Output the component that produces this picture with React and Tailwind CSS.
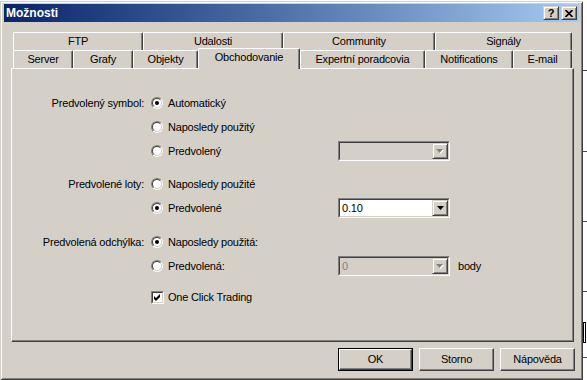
import React from 'react';

const backTabs = [
  { label: 'FTP', w: 'w-[130px]' },
  { label: 'Udalosti', w: 'w-[140px]' },
  { label: 'Community', w: 'w-[152px]' },
  { label: 'Signály', w: 'w-[137px]' },
];

const frontTabs = [
  { label: 'Server', w: 'w-[60px]' },
  { label: 'Grafy', w: 'w-[60px]' },
  { label: 'Objekty', w: 'w-[65px]' },
  { label: 'Obchodovanie', w: 'w-[102px]', active: true },
  { label: 'Expertní poradcovia', w: 'w-[125px]' },
  { label: 'Notifications', w: 'w-[88px]' },
  { label: 'E-mail', w: 'w-[59px]' },
];

// classic raised tab, open at the bottom
const tabEdge =
  'flex items-center justify-center border-l border-t border-r border-white border-r-[#404040] shadow-[inset_-1px_0_0_#808080] rounded-t-[2px]';

function Tab({ label, w, active }) {
  if (active) {
    return (
      <div className={`${tabEdge} ${w} relative top-[1px] z-10 h-[21px] bg-[#d4d0c8] pb-[3px]`}>
        {label}
      </div>
    );
  }
  return <div className={`${tabEdge} ${w} h-[18px] bg-[#d4d0c8]`}>{label}</div>;
}

function Radio({ checked }) {
  return (
    <span className="flex h-[12px] w-[12px] shrink-0 rounded-full border border-t-[#808080] border-l-[#808080] border-r-white border-b-white">
      <span className="flex h-full w-full items-center justify-center rounded-full border border-t-[#404040] border-l-[#404040] border-r-[#d4d0c8] border-b-[#d4d0c8] bg-white">
        {checked && <span className="h-[4px] w-[4px] rounded-full bg-black" />}
      </span>
    </span>
  );
}

function Checkbox({ checked }) {
  return (
    <span className="flex h-[13px] w-[13px] shrink-0 border border-t-[#808080] border-l-[#808080] border-r-white border-b-white">
      <span className="flex h-full w-full items-center justify-center border border-t-[#404040] border-l-[#404040] border-r-[#d4d0c8] border-b-[#d4d0c8] bg-white">
        {checked && (
          <svg width="7" height="7" viewBox="0 0 7 7">
            <path d="M0 2 L2 4 L6 0 L6 3 L2 7 L0 5 Z" fill="#000" />
          </svg>
        )}
      </span>
    </span>
  );
}

function Combo({ value, enabled }) {
  return (
    <div className="flex h-[20px] w-[112px] shrink-0 border border-t-[#808080] border-l-[#808080] border-r-white border-b-white">
      <div
        className={`flex flex-1 items-center border border-t-[#404040] border-l-[#404040] border-r-[#d4d0c8] border-b-[#d4d0c8] ${
          enabled ? 'bg-white' : 'bg-[#d4d0c8]'
        }`}
      >
        <span className={`flex-1 pl-[2px] ${enabled ? 'text-black' : 'text-[#808080]'}`}>{value}</span>
        <span className="flex h-[16px] w-[16px] items-center justify-center border border-t-[#d4d0c8] border-l-[#d4d0c8] border-r-[#404040] border-b-[#404040] bg-[#d4d0c8] shadow-[inset_1px_1px_0_#fff,inset_-1px_-1px_0_#808080]">
          {enabled ? (
            <svg width="7" height="4" viewBox="0 0 7 4">
              <path d="M0 0 H7 L3.5 4 Z" fill="#000" />
            </svg>
          ) : (
            <svg width="8" height="5" viewBox="0 0 8 5">
              <path d="M1 1 H8 L4.5 5 Z" fill="#fff" />
              <path d="M0 0 H7 L3.5 4 Z" fill="#808080" />
            </svg>
          )}
        </span>
      </div>
    </div>
  );
}

function Row({ label, control, text, combo, extra, className = '' }) {
  return (
    <div className={`flex h-[24px] items-center ${className}`}>
      <div className="w-[132px] text-right">{label}</div>
      <div className="flex w-[194px] items-center gap-[5px] pl-[7px]">
        {control}
        <span>{text}</span>
      </div>
      {combo}
      {extra && <span className="ml-[8px]">{extra}</span>}
    </div>
  );
}

function Button({ children, isDefault }) {
  const face = (
    <div className="flex h-full w-full items-center justify-center border border-t-white border-l-white border-r-[#404040] border-b-[#404040] shadow-[inset_-1px_-1px_0_#808080]">
      {children}
    </div>
  );
  return <div className={`h-[23px] w-[75px] ${isDefault ? 'border border-black' : ''}`}>{face}</div>;
}

function CaptionButton({ children }) {
  return (
    <div className="flex h-[14px] w-[16px] items-center justify-center border border-t-[#d4d0c8] border-l-[#d4d0c8] border-r-[#404040] border-b-[#404040] bg-[#d4d0c8] shadow-[inset_1px_1px_0_#fff,inset_-1px_-1px_0_#808080]">
      {children}
    </div>
  );
}

export default function App() {
  return (
    <div className="flex h-[380px] w-[587px] overflow-hidden bg-white font-['Liberation_Sans',Arial,sans-serif] text-[11px] tracking-[-0.2px] text-black">
      {/* Dialog window */}
      <div className="mt-[1px] flex h-[379px] w-[583px] shrink-0 flex-col bg-[#d4d0c8] px-[4px] pt-[3px] shadow-[inset_1px_1px_0_#d4d0c8,inset_-1px_-1px_0_#404040,inset_2px_2px_0_#ffffff,inset_-2px_-2px_0_#808080]">
        {/* Title bar */}
        <div className="flex h-[18px] items-center bg-linear-to-r from-[#0a246a] to-[#a6caf0] pl-[2px] pr-[2px]">
          <span className="flex-1 text-[12px] font-bold tracking-normal text-white">Možnosti</span>
          <div className="flex gap-[2px]">
            <CaptionButton>
              <span className="text-[11px] font-bold leading-none tracking-normal">?</span>
            </CaptionButton>
            <CaptionButton>
              <svg width="8" height="7" viewBox="0 0 8 7">
                <path d="M0.5 0 L7.5 7 M7.5 0 L0.5 7" stroke="#000" strokeWidth="1.7" />
              </svg>
            </CaptionButton>
          </div>
        </div>

        {/* Tabs */}
        <div className="ml-[9px] mt-[10px] flex flex-col">
          <div className="flex">
            {backTabs.map((t) => (
              <Tab key={t.label} {...t} />
            ))}
          </div>
          <div className="flex h-[18px] items-end">
            {frontTabs.map((t) => (
              <Tab key={t.label} {...t} />
            ))}
          </div>
        </div>

        {/* Tab page */}
        <div className="ml-[7px] flex h-[274px] w-[563px] flex-col border-l border-t border-r border-b border-white border-r-[#404040] border-b-[#404040] pt-[22px] shadow-[inset_-1px_-1px_0_#808080]">
          <Row label="Predvolený symbol:" control={<Radio checked />} text="Automatický" />
          <Row control={<Radio />} text="Naposledy použitý" />
          <Row control={<Radio />} text="Predvolený" combo={<Combo value="" />} />

          <Row className="mt-[9px]" label="Predvolené loty:" control={<Radio />} text="Naposledy použité" />
          <Row control={<Radio checked />} text="Predvolené" combo={<Combo value="0.10" enabled />} />

          <Row className="mt-[10px]" label="Predvolená odchýlka:" control={<Radio checked />} text="Naposledy použitá:" />
          <Row control={<Radio />} text="Predvolená:" combo={<Combo value="0" />} extra="body" />

          <div className="mt-[7px] flex h-[24px] items-center">
            <div className="flex items-center gap-[4px] pl-[139px]">
              <Checkbox checked />
              <span>One Click Trading</span>
            </div>
          </div>
        </div>

        {/* Dialog buttons */}
        <div className="mt-[6px] flex justify-end gap-[6px] pr-[4px]">
          <Button isDefault>OK</Button>
          <Button>Storno</Button>
          <Button>Nápověda</Button>
        </div>
      </div>

      {/* Chart peeking out behind the dialog */}
      <div className="relative flex-1">
        <div className="absolute left-0 right-0 top-[70px] h-px bg-[#404040]" />
        <div className="absolute left-0 right-0 top-[151px] h-px bg-[#008000]" />
        <div className="absolute left-0 right-0 top-[221px] h-px bg-[#008000]" />
        <div className="absolute left-0 right-0 top-[291px] h-px bg-[#008000]" />
        <div className="absolute left-0 top-[322px] h-[21px] w-[3px] border border-black bg-white" />
        <div className="absolute left-0 right-0 top-[357px] h-px bg-[#008000]" />
      </div>
    </div>
  );
}
